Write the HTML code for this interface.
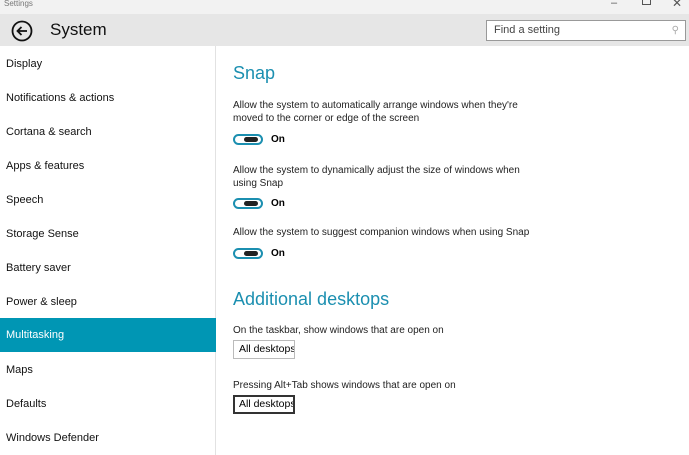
<!DOCTYPE html><html><head><style>
*{margin:0;padding:0;box-sizing:border-box}
body{width:689px;height:455px;overflow:hidden;background:#fff;font-family:"Liberation Sans",sans-serif;position:relative;color:#000}
.tb{position:absolute;left:0;top:0;width:689px;height:14px;background:#f2f2f2}
.tb span{position:absolute;left:4px;top:-1px;font-size:8px;color:#777}
.hd{position:absolute;left:0;top:14px;width:689px;height:32px;background:#e6e6e6}
.side{position:absolute;left:0;top:46px;width:216px;height:409px;border-right:1px solid #e2e2e2}
.it{position:absolute;left:0;width:216px;height:34px;font-size:11px;padding-left:6px;line-height:34px;color:#111}
.sel{background:#0096b4;color:#fff}
.t{position:absolute;font-size:10px;color:#222;line-height:13px;white-space:nowrap}
.h{position:absolute;left:233px;font-size:18px;color:#1b8fb0}
.tg{position:absolute;left:233px;width:30px;height:11px;border:2px solid #1b8fb0;border-radius:6px}
.tg i{position:absolute;right:3px;top:1px;width:14px;height:5px;background:#222;border-radius:3px}
.on{position:absolute;left:271px;font-size:10px;font-weight:bold}
.dd{position:absolute;left:233px;width:62px;height:19px;border:1px solid #bbb;font-size:10.5px;padding-left:5px;line-height:17px;white-space:nowrap;overflow:hidden}
</style></head><body>
<div class="tb"><span>Settings</span>
<span style="left:611px;top:-3px;font-size:11px;color:#555">–</span>
<span style="left:642px;top:-3px;width:9px;height:8px;border:1px solid #555"></span>
<span style="left:672px;top:-4px;font-size:12px;color:#555">✕</span></div>
<div class="hd">
<svg style="position:absolute;left:11px;top:6px" width="22" height="22" viewBox="0 0 22 22"><circle cx="11" cy="11" r="9.5" fill="none" stroke="#111" stroke-width="1.8"/><path d="M16 11H6.5M10.5 7L6.5 11L10.5 15" fill="none" stroke="#111" stroke-width="1.8"/></svg>
<span style="position:absolute;left:50px;top:6px;font-size:17px;color:#111">System</span>
<div style="position:absolute;left:486px;top:6px;width:200px;height:21px;background:#fff;border:1px solid #999;font-size:11px;color:#444;padding-left:7px;line-height:19px">Find a setting<span style="position:absolute;right:6px;color:#aaa;font-size:10px">⚲</span></div>
</div>
<div class="side">
<div class="it" style="top:1px">Display</div>
<div class="it" style="top:35px">Notifications &amp; actions</div>
<div class="it" style="top:69px">Cortana &amp; search</div>
<div class="it" style="top:103px">Apps &amp; features</div>
<div class="it" style="top:137px">Speech</div>
<div class="it" style="top:171px">Storage Sense</div>
<div class="it" style="top:205px">Battery saver</div>
<div class="it" style="top:239px">Power &amp; sleep</div>
<div class="it sel" style="top:272px">Multitasking</div>
<div class="it" style="top:307px">Maps</div>
<div class="it" style="top:341px">Defaults</div>
<div class="it" style="top:375px">Windows Defender</div>
</div>
<div class="h" style="top:63px">Snap</div>
<div class="t" style="left:233px;top:99px">Allow the system to automatically arrange windows when they're<br>moved to the corner or edge of the screen</div>
<div class="tg" style="top:134px"><i></i></div><div class="on" style="top:134px">On</div>
<div class="t" style="left:233px;top:164px">Allow the system to dynamically adjust the size of windows when<br>using Snap</div>
<div class="tg" style="top:198px"><i></i></div><div class="on" style="top:198px">On</div>
<div class="t" style="left:233px;top:226px">Allow the system to suggest companion windows when using Snap</div>
<div class="tg" style="top:248px"><i></i></div><div class="on" style="top:248px">On</div>
<div class="h" style="top:289px">Additional desktops</div>
<div class="t" style="left:233px;top:324px">On the taskbar, show windows that are open on</div>
<div class="dd" style="top:340px">All desktops</div>
<div class="t" style="left:233px;top:379px">Pressing Alt+Tab shows windows that are open on</div>
<div class="dd" style="top:395px;border:2px solid #333;line-height:15px;padding-left:4px">All desktops</div>
</body></html>
